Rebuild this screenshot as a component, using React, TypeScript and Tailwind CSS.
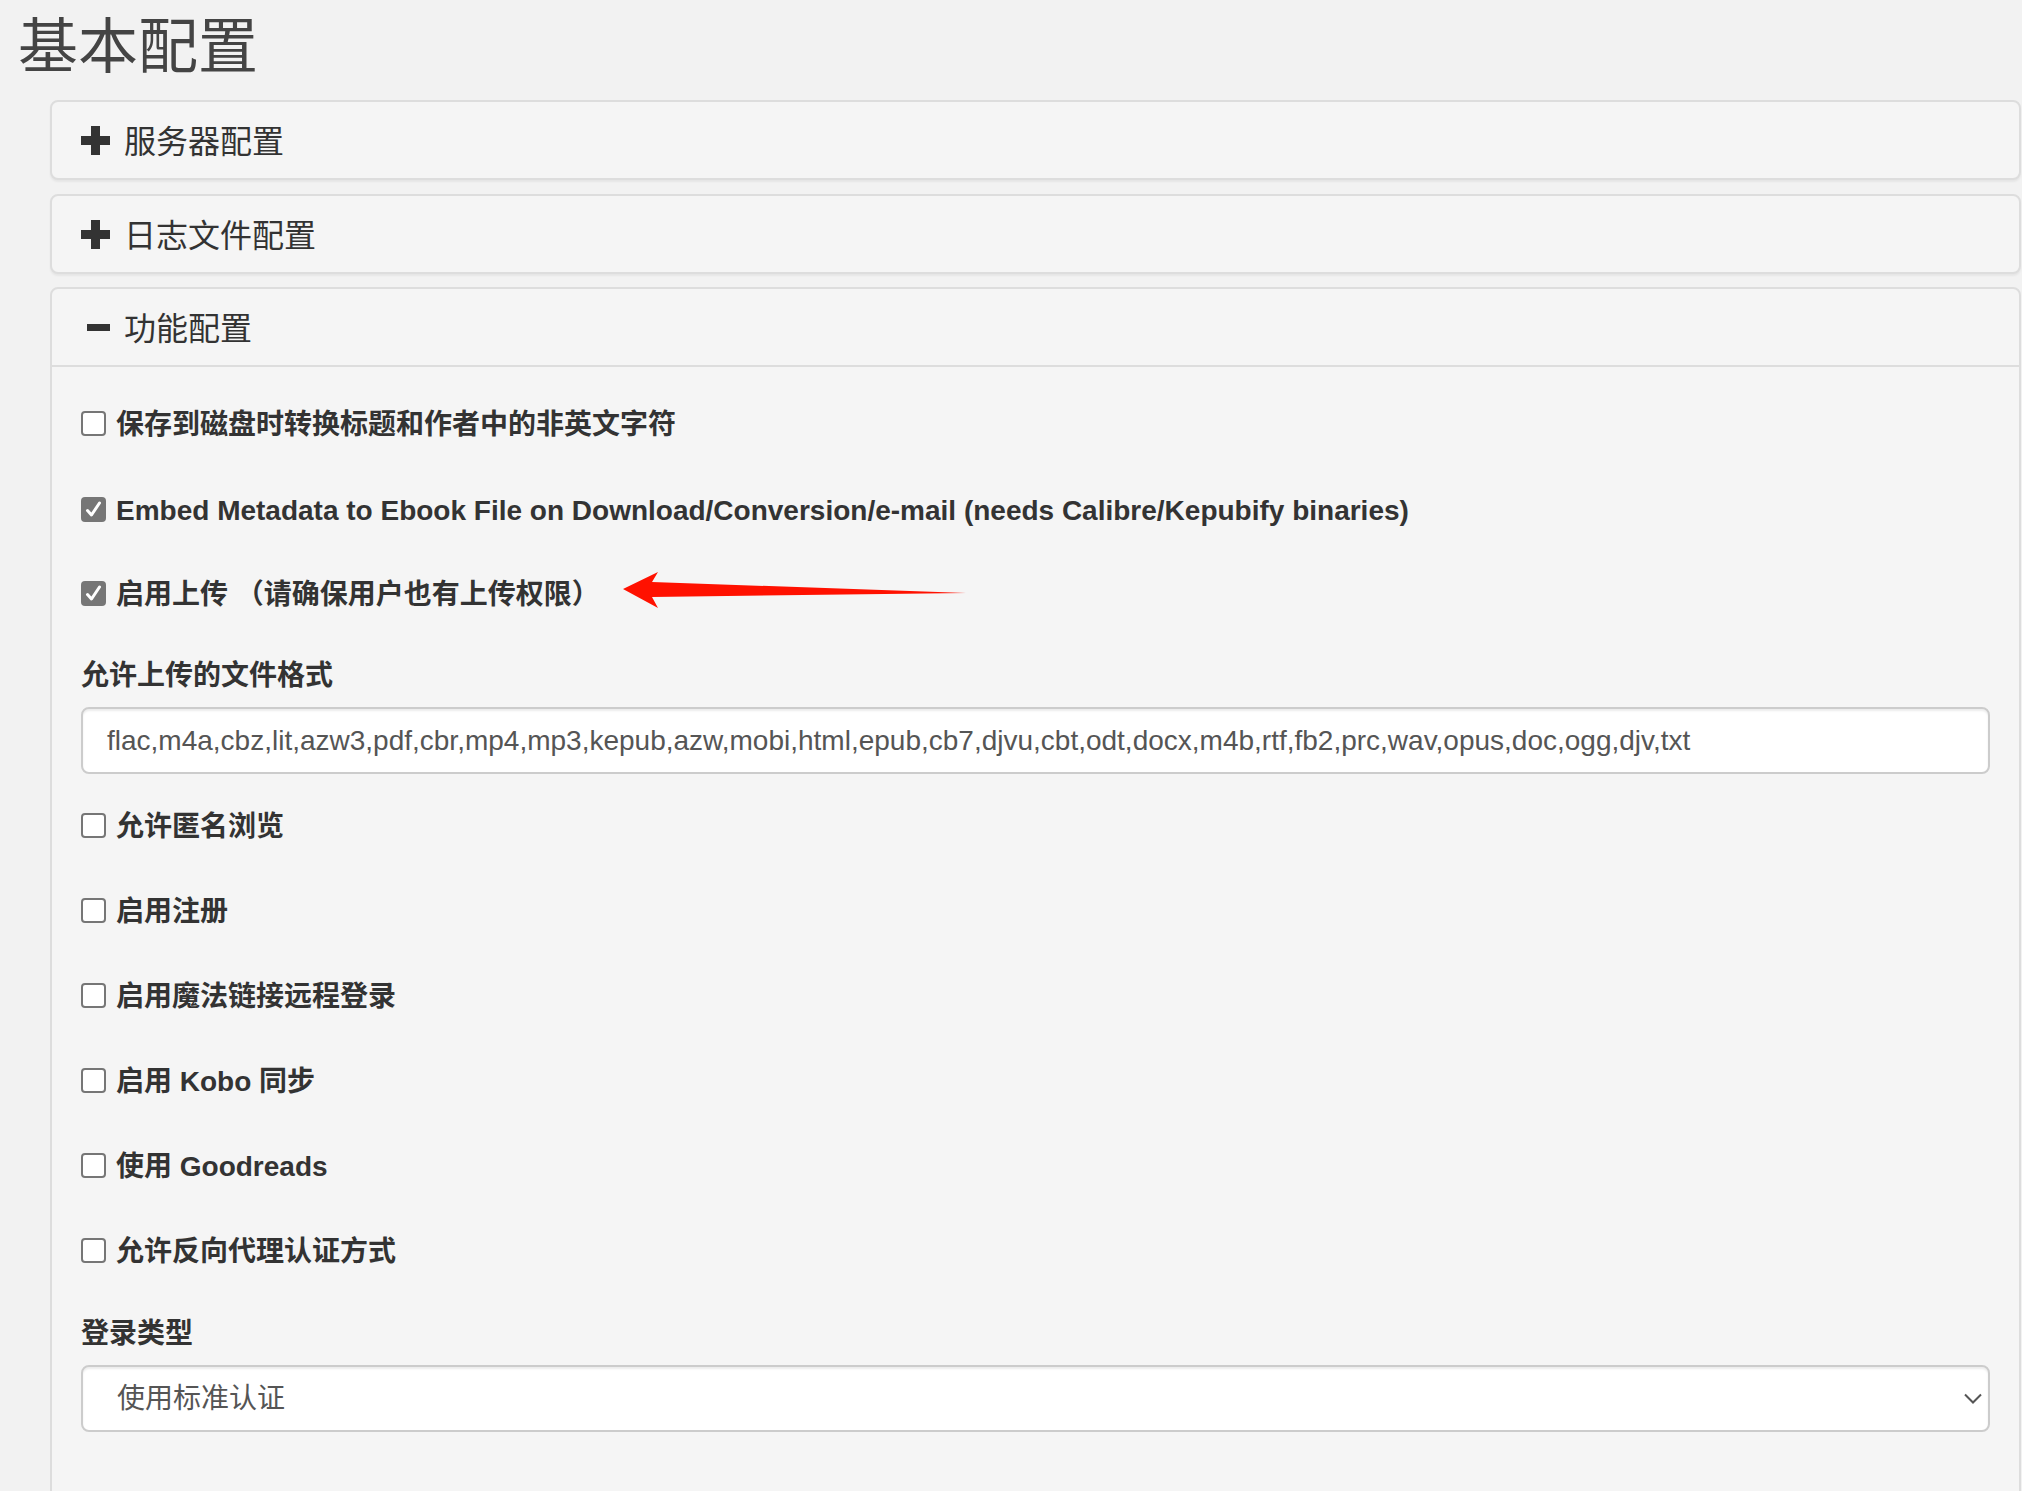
import React from 'react'

const FORMATS =
  'flac,m4a,cbz,lit,azw3,pdf,cbr,mp4,mp3,kepub,azw,mobi,html,epub,cb7,djvu,cbt,odt,docx,m4b,rtf,fb2,prc,wav,opus,doc,ogg,djv,txt'

function PlusIcon() {
  return (
    <svg width="29" height="29" viewBox="0 0 29 29" className="shrink-0">
      <path d="M10 0h9v10h10v9H19v10h-9V19H0v-9h10z" fill="#333" />
    </svg>
  )
}

function MinusIcon() {
  return (
    <svg width="29" height="29" viewBox="0 0 29 29" className="shrink-0">
      <rect x="6" y="11" width="23" height="7" fill="#333" />
    </svg>
  )
}

function Box({ checked }: { checked?: boolean }) {
  if (checked) {
    return (
      <span className="mt-[-4px] flex h-[25px] w-[25px] shrink-0 items-center justify-center rounded-[4px] bg-[#767676]">
        <svg width="17" height="17" viewBox="0 0 17 17">
          <path d="M2.5 9.5l4 4.5 8-12" fill="none" stroke="#fff" strokeWidth="3" strokeLinecap="round" strokeLinejoin="round" />
        </svg>
      </span>
    )
  }
  return <span className="mt-[-4px] block h-[25px] w-[25px] shrink-0 rounded-[4px] border-2 border-[#767676] bg-white" />
}

function CheckRow({ label, checked, className }: { label: string; checked?: boolean; className: string }) {
  return (
    <div className={`flex h-[40px] items-center gap-[10px] ${className}`}>
      <Box checked={checked} />
      <span className="text-[28px] font-bold leading-[40px] text-[#333]">{label}</span>
    </div>
  )
}

function ClosedPanel({ title, className }: { title: string; className: string }) {
  return (
    <div
      className={`flex h-[80px] items-center gap-[14px] rounded-[8px] border-2 border-[#ddd] bg-[#f5f5f5] px-[29px] shadow-[0_2px_2px_rgba(0,0,0,0.05)] ${className}`}
    >
      <PlusIcon />
      <span className="pt-[5px] text-[32px] leading-[35px] text-[#333]">{title}</span>
    </div>
  )
}

export default function App() {
  return (
    <div className="relative h-[1491px] w-[2022px] overflow-hidden bg-[#f2f2f2] font-['Liberation_Sans','Noto_Sans_CJK_SC',sans-serif] text-[#333]">
      <h2 className="ml-[18px] mt-[15px] h-[66px] text-[60px] font-normal leading-[66px] text-[#444]">基本配置</h2>

      <div className="ml-[50px] mr-[1px] mt-[19px] flex flex-col">
        <ClosedPanel title="服务器配置" className="" />
        <ClosedPanel title="日志文件配置" className="mt-[14px]" />

        <div className="mt-[13px] h-[1300px] rounded-t-[8px] border-2 border-[#ddd] bg-[#f5f5f5]">
          <div className="flex h-[78px] items-center gap-[14px] border-b-2 border-[#ddd] px-[29px]">
            <MinusIcon />
            <span className="pt-[5px] text-[32px] leading-[35px] text-[#333]">功能配置</span>
          </div>

          <div className="flex flex-col px-[29px] pt-[38px]">
            <CheckRow label="保存到磁盘时转换标题和作者中的非英文字符" className="" />
            <CheckRow
              checked
              label="Embed Metadata to Ebook File on Download/Conversion/e-mail (needs Calibre/Kepubify binaries)"
              className="mt-[46px]"
            />
            <CheckRow checked label="启用上传 （请确保用户也有上传权限）" className="mt-[44px]" />

            <label className="mt-[41px] block h-[40px] text-[28px] font-bold leading-[40px] text-[#333]">允许上传的文件格式</label>
            <div className="mt-[11px] flex h-[67px] items-center rounded-[8px] border-2 border-[#ccc] bg-white pl-[24px] shadow-[inset_0_2px_2px_rgba(0,0,0,0.075)]">
              <span className="text-[28px] leading-[40px] text-[#555]">{FORMATS}</span>
            </div>

            <CheckRow label="允许匿名浏览" className="mt-[33px]" />
            <CheckRow label="启用注册" className="mt-[45px]" />
            <CheckRow label="启用魔法链接远程登录" className="mt-[45px]" />
            <CheckRow label="启用 Kobo 同步" className="mt-[45px]" />
            <CheckRow label="使用 Goodreads" className="mt-[45px]" />
            <CheckRow label="允许反向代理认证方式" className="mt-[45px]" />

            <label className="mt-[42px] block h-[40px] text-[28px] font-bold leading-[40px] text-[#333]">登录类型</label>
            <div className="mt-[11px] flex h-[67px] items-center justify-between rounded-[8px] border-2 border-[#ccc] bg-white pl-[34px] pr-[6px] shadow-[inset_0_2px_2px_rgba(0,0,0,0.075)]">
              <span className="text-[28px] leading-[40px] text-[#555]">使用标准认证</span>
              <svg width="18" height="11" viewBox="0 0 18 11">
                <path d="M1 1.5l8 8 8-8" fill="none" stroke="#555" strokeWidth="2" />
              </svg>
            </div>
          </div>
        </div>
      </div>

      <svg className="pointer-events-none absolute left-[620px] top-[568px]" width="350" height="45" viewBox="0 0 350 45">
        <polygon points="3,21 38,4 32,14 346,25 32,29 38,40" fill="#ff1100" />
      </svg>
    </div>
  )
}
